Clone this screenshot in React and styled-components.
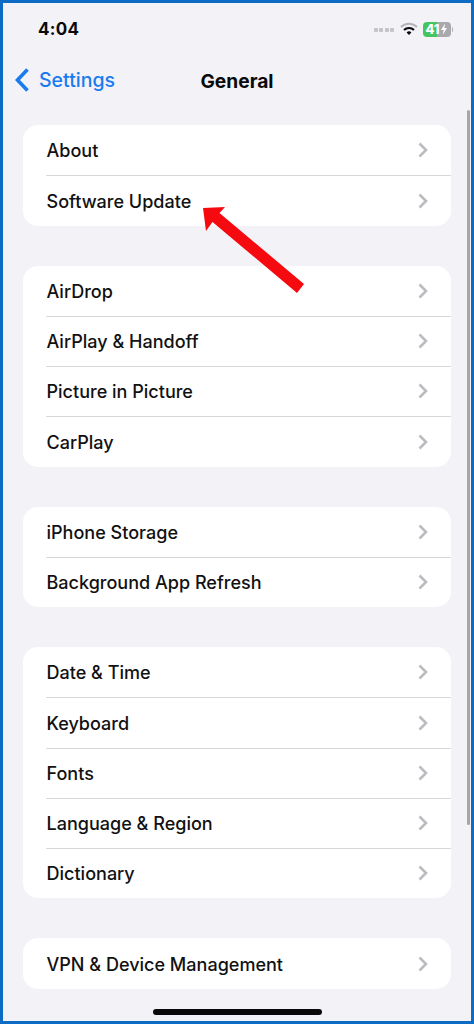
import React from "react";
import styled, { createGlobalStyle } from "styled-components";

const Global = createGlobalStyle`
  html, body { margin: 0; padding: 0; background: #f2f2f7; }
  * { box-sizing: border-box; }
`;

const Frame = styled.div`
  position: relative;
  width: 474px;
  height: 1024px;
  overflow: hidden;
  background: #f2f2f7;
  border: 3px solid #0c6cc4;
  font-family: Inter, "Liberation Sans", sans-serif;
`;

const StatusBar = styled.div`
  display: flex;
  align-items: center;
  justify-content: space-between;
  height: 40px;
  padding: 12px 18px 0 35px;
`;

const Time = styled.span`
  font-size: 17px;
  font-weight: 700;
  letter-spacing: 0.3px;
  color: #0a0a0a;
`;

const StatusIcons = styled.div`
  display: flex;
  align-items: center;
  gap: 5px;
`;

const Signal = styled.div`
  display: flex;
  gap: 1.5px;
  margin-right: 1px;
  margin-top: 2px;
`;

const SignalDot = styled.span`
  width: 4px;
  height: 4px;
  border-radius: 1px;
  background: #c4c4c8;
`;

const Battery = styled.div`
  position: relative;
  display: flex;
  align-items: center;
  width: 28px;
  height: 15px;
  border-radius: 4px;
  background: linear-gradient(90deg, #46c45f 0 50%, #a9a9ad 50% 100%);
  margin-right: 2px;

  &::after {
    content: "";
    position: absolute;
    right: -2px;
    top: 5px;
    width: 1.5px;
    height: 5px;
    border-radius: 0 1px 1px 0;
    background: #b4b4b8;
  }
`;

const BatteryText = styled.span`
  padding-left: 2.5px;
  font-size: 13px;
  line-height: 15px;
  font-weight: 800;
  color: #fff;
  letter-spacing: 0;
`;

const NavBar = styled.div`
  position: relative;
  display: flex;
  align-items: center;
  justify-content: center;
  height: 55px;
  margin-top: 10px;
`;

const Back = styled.div`
  position: absolute;
  left: 11px;
  top: 14px;
  display: flex;
  align-items: center;
  gap: 9px;
  color: #1a7bef;
  font-size: 19.5px;
  font-weight: 500;
`;

const Title = styled.h1`
  margin: 0;
  font-size: 19.2px;
  font-weight: 700;
  color: #0a0a0a;
`;

const List = styled.div`
  display: flex;
  flex-direction: column;
  gap: 40px;
  padding: 17.2px 20px 0;
`;

const Group = styled.div`
  background: #fff;
  border-radius: 15px;
  overflow: hidden;
`;

const Row = styled.div`
  display: flex;
  align-items: center;
  justify-content: space-between;
  height: 50.25px;
  padding-left: 23.5px;
  padding-right: 23px;
  position: relative;
  font-size: 18.05px;
  font-weight: 500;
  color: #111;

  & + &::before {
    content: "";
    position: absolute;
    top: 0;
    left: 23px;
    right: 0;
    height: 1px;
    background: #d8d8dc;
  }
`;

const RowLabel = styled.span`
  padding-top: 1px;
`;

const Scrollbar = styled.div`
  position: absolute;
  left: 463.5px;
  top: 107px;
  width: 3.5px;
  height: 715px;
  border-radius: 2px;
  background: #a6a6aa;
`;

const HomeBar = styled.div`
  position: absolute;
  left: 150px;
  bottom: 6px;
  width: 169px;
  height: 6px;
  border-radius: 3px;
  background: #0a0a0a;
`;

const ArrowSvg = styled.svg`
  position: absolute;
  left: -3px;
  top: -3px;
  width: 474px;
  height: 1024px;
  pointer-events: none;
`;

const Chevron = () => (
  <svg width="10" height="16" viewBox="0 0 10 16" fill="none">
    <path d="M1.5 1.5 L8 8 L1.5 14.5" stroke="#bcbcc0" strokeWidth="2.6" />
  </svg>
);

const groups = [
  ["About", "Software Update"],
  ["AirDrop", "AirPlay & Handoff", "Picture in Picture", "CarPlay"],
  ["iPhone Storage", "Background App Refresh"],
  ["Date & Time", "Keyboard", "Fonts", "Language & Region", "Dictionary"],
  ["VPN & Device Management"],
];

export default function App() {
  return (
    <Frame>
      <Global />
      <StatusBar>
        <Time>4:04</Time>
        <StatusIcons>
          <Signal>
            {[0, 1, 2, 3].map((i) => (
              <SignalDot key={i} />
            ))}
          </Signal>
          <svg width="18" height="14" viewBox="0 0 18 14" fill="none">
            <path d="M1 5 A11.5 11.5 0 0 1 17 5" stroke="#b4b4b8" strokeWidth="2" />
            <path d="M4 8 A7 7 0 0 1 14 8" stroke="#0a0a0a" strokeWidth="2" />
            <path d="M6.6 10.4 A3.6 3.6 0 0 1 11.4 10.4 L9 13 Z" fill="#0a0a0a" />
          </svg>
          <Battery>
            <BatteryText>41</BatteryText>
            <svg width="8" height="12" viewBox="0 0 8 12">
              <path d="M5 0.5 L1 7 H3.6 L3 11.5 L7 5 H4.4 Z" fill="#fff" />
            </svg>
          </Battery>
        </StatusIcons>
      </StatusBar>
      <NavBar>
        <Back>
          <svg width="16" height="26" viewBox="0 0 16 26" fill="none">
            <path d="M13.5 2.5 L3.5 13 L13.5 23.5" stroke="#1a7bef" strokeWidth="3.6" />
          </svg>
          Settings
        </Back>
        <Title>General</Title>
      </NavBar>
      <List>
        {groups.map((g) => (
          <Group key={g[0]}>
            {g.map((label) => (
              <Row key={label}>
                <RowLabel>{label}</RowLabel>
                <Chevron />
              </Row>
            ))}
          </Group>
        ))}
      </List>
      <Scrollbar />
      <HomeBar />
      <ArrowSvg viewBox="0 0 474 1024">
        <path
          d="M203 208 L225 207 L219.5 213 L304 284 L297 293 L212.5 222 L206 231 Z"
          fill="#f50a0f"
        />
      </ArrowSvg>
    </Frame>
  );
}
